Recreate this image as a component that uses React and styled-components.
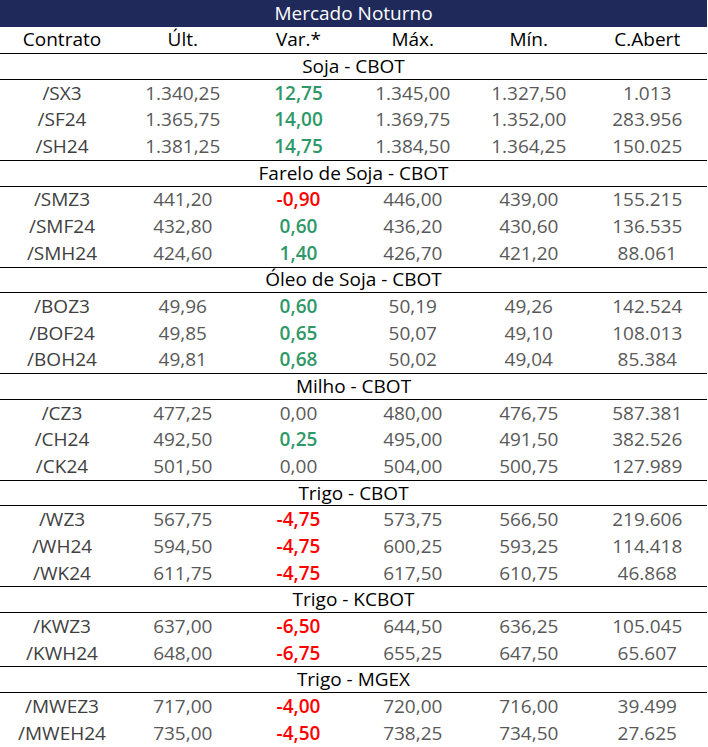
import React from "react";
import styled, {createGlobalStyle} from "styled-components";

const GlobalStyle = createGlobalStyle`
  html, body {
    margin: 0;
    padding: 0;
    background: #ffffff;
  }
  body {
    font-family: "Open Sans", Lato, sans-serif;
  }
`;

const sections = [
  {
    title: "Soja - CBOT",
    rows: [
      ["/SX3", "1.340,25", "12,75", "1.345,00", "1.327,50", "1.013"],
      ["/SF24", "1.365,75", "14,00", "1.369,75", "1.352,00", "283.956"],
      ["/SH24", "1.381,25", "14,75", "1.384,50", "1.364,25", "150.025"]
    ]
  },
  {
    title: "Farelo de Soja - CBOT",
    rows: [
      ["/SMZ3", "441,20", "-0,90", "446,00", "439,00", "155.215"],
      ["/SMF24", "432,80", "0,60", "436,20", "430,60", "136.535"],
      ["/SMH24", "424,60", "1,40", "426,70", "421,20", "88.061"]
    ]
  },
  {
    title: "Óleo de Soja - CBOT",
    rows: [
      ["/BOZ3", "49,96", "0,60", "50,19", "49,26", "142.524"],
      ["/BOF24", "49,85", "0,65", "50,07", "49,10", "108.013"],
      ["/BOH24", "49,81", "0,68", "50,02", "49,04", "85.384"]
    ]
  },
  {
    title: "Milho - CBOT",
    rows: [
      ["/CZ3", "477,25", "0,00", "480,00", "476,75", "587.381"],
      ["/CH24", "492,50", "0,25", "495,00", "491,50", "382.526"],
      ["/CK24", "501,50", "0,00", "504,00", "500,75", "127.989"]
    ]
  },
  {
    title: "Trigo - CBOT",
    rows: [
      ["/WZ3", "567,75", "-4,75", "573,75", "566,50", "219.606"],
      ["/WH24", "594,50", "-4,75", "600,25", "593,25", "114.418"],
      ["/WK24", "611,75", "-4,75", "617,50", "610,75", "46.868"]
    ]
  },
  {
    title: "Trigo - KCBOT",
    rows: [
      ["/KWZ3", "637,00", "-6,50", "644,50", "636,25", "105.045"],
      ["/KWH24", "648,00", "-6,75", "655,25", "647,50", "65.607"]
    ]
  },
  {
    title: "Trigo - MGEX",
    rows: [
      ["/MWEZ3", "717,00", "-4,00", "720,00", "716,00", "39.499"],
      ["/MWEH24", "735,00", "-4,50", "738,25", "734,50", "27.625"]
    ]
  }
];

const headers = ["Contrato", "Últ.", "Var.*", "Máx.", "Mín.", "C.Abert"];

const ROW = "26.67px";

const Table = styled.div`
  width: 707px;
  font-size: 19px;
  line-height: 1;
  color: #595959;
`;

const Title = styled.div`
  height: ${ROW};
  background: #1f2a5b;
  color: #ffffff;
  display: flex;
  align-items: center;
  justify-content: center;
`;

const Row = styled.div`
  display: grid;
  grid-template-columns: 124px 117.5px 114px 114.5px 117.5px 119.5px;
  height: ${ROW};
  align-items: center;
`;

const HeadCell = styled.div`
  text-align: center;
  color: #000000;
`;

const SectionTitle = styled.div`
  box-sizing: border-box;
  height: ${ROW};
  border-top: 1px solid #000;
  border-bottom: 1px solid #000;
  display: flex;
  align-items: center;
  justify-content: center;
  color: #000000;
`;

const Cell = styled.div`
  text-align: center;
  color: ${props => props.tone || "#595959"};
  font-weight: ${props => (props.strong ? 600 : 400)};
`;

function varColor(v) {
  if (v.startsWith("-")) return "#ff0000";
  if (v === "0,00") return "#595959";
  return "#2f9868";
}

export default function App() {
  return (
    <>
      <GlobalStyle />
      <Table>
        <Title>Mercado Noturno</Title>
        <Row>
          {headers.map(h => (
            <HeadCell key={h}>{h}</HeadCell>
          ))}
        </Row>
        {sections.map(s => (
          <React.Fragment key={s.title}>
            <SectionTitle>{s.title}</SectionTitle>
            {s.rows.map(r => (
              <Row key={r[0]}>
                <Cell tone="#404040">{r[0]}</Cell>
                <Cell>{r[1]}</Cell>
                <Cell tone={varColor(r[2])} strong={r[2] !== "0,00"}>
                  {r[2]}
                </Cell>
                <Cell>{r[3]}</Cell>
                <Cell>{r[4]}</Cell>
                <Cell>{r[5]}</Cell>
              </Row>
            ))}
          </React.Fragment>
        ))}
      </Table>
    </>
  );
}
